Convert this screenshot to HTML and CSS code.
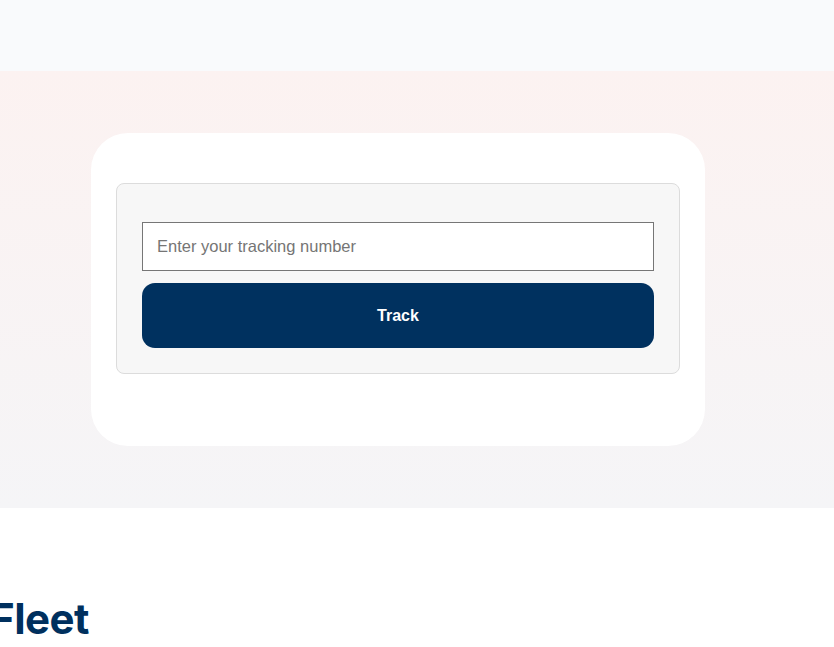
FILE: index.html
```html
<!DOCTYPE html>
<html lang="en">
<head>
<meta charset="utf-8">
<title>Track</title>
<link rel="stylesheet" href="styles.css">
</head>
<body>
<header class="topbar"></header>
<section class="hero">
  <div class="card">
    <form class="track-box">
      <input class="track-input" type="text" placeholder="Enter your tracking number">
      <button class="track-btn" type="button">Track</button>
    </form>
  </div>
</section>
<section class="fleet">
  <h2 class="fleet-title">Fleet</h2>
</section>
</body>
</html>
```
FILE: styles.css
```css
* { box-sizing: border-box; }
html, body { margin: 0; padding: 0; }
body {
  width: 834px;
  overflow: hidden;
  background: #ffffff;
  font-family: "Liberation Sans", Arial, sans-serif;
}
.topbar {
  height: 71px;
  background: #f9fafc;
}
.hero {
  height: 437px;
  background: linear-gradient(180deg, #fcf2f1 0%, #f5f5f7 100%);
  padding: 62px 0 0 91px;
}
.card {
  width: 614px;
  height: 313px;
  background: #ffffff;
  border-radius: 37px;
  padding: 50px 25px 0 25px;
}
.track-box {
  margin: 0;
  background: #f7f7f7;
  border: 1px solid #dcdcdc;
  border-radius: 8px;
  padding: 38px 25px 25px 25px;
  display: flex;
  flex-direction: column;
  gap: 12px;
}
.track-input {
  height: 49px;
  border: 1px solid #767676;
  background: #ffffff;
  padding: 0 14px;
  font-family: "Liberation Sans", Arial, sans-serif;
  font-size: 16.5px;
  color: #333;
  outline: none;
}
.track-input::placeholder { color: #757575; }
.track-btn {
  height: 65px;
  border: 0;
  border-radius: 13px;
  background: #00315f;
  color: #ffffff;
  font-family: "Liberation Sans", Arial, sans-serif;
  font-weight: 700;
  font-size: 16px;
  cursor: pointer;
}
.fleet {
  padding-top: 84px;
}
.fleet-title {
  margin: 0 0 0 -10px;
  font-family: Inter, "Noto Sans", sans-serif;
  font-weight: 700;
  font-size: 42px;
  line-height: 54px;
  color: #00305e;
  letter-spacing: -0.5px;
}
```
